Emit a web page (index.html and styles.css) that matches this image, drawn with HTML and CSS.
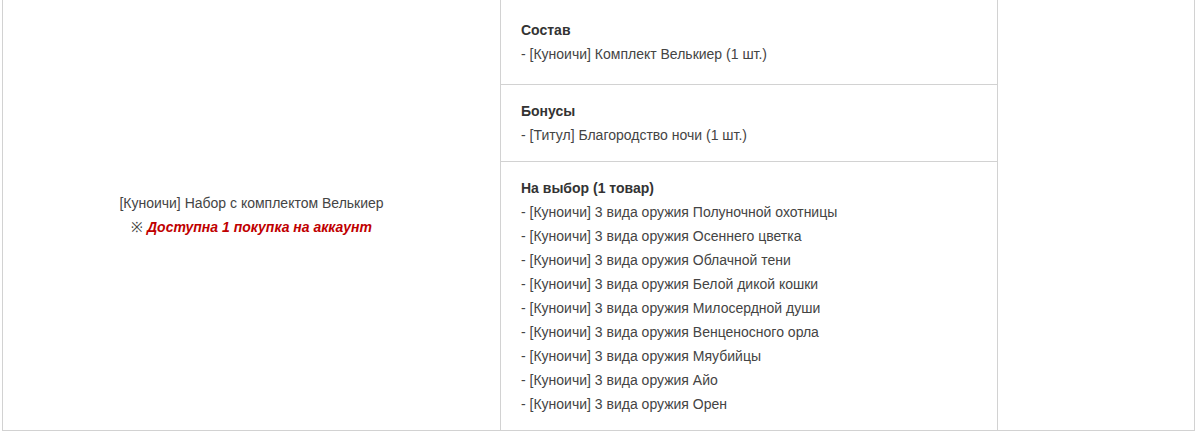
FILE: index.html
```html
<!DOCTYPE html>
<html lang="ru">
<head>
<meta charset="utf-8">
<title>Набор</title>
<link rel="stylesheet" href="styles.css">
</head>
<body>
<div class="wrap">
<table class="pkg">
  <colgroup>
    <col class="c1">
    <col class="c2">
    <col class="c3">
  </colgroup>
  <tbody>
    <tr>
      <td class="name" rowspan="3">
        <div>[Куноичи] Набор с комплектом Велькиер</div>
        <div class="limit">※ <em>Доступна 1 покупка на аккаунт</em></div>
      </td>
      <td class="items first">
        <div class="title">Состав</div>
        <div>- [Куноичи] Комплект Велькиер (1 шт.)</div>
      </td>
      <td class="empty" rowspan="3"></td>
    </tr>
    <tr>
      <td class="items">
        <div class="title">Бонусы</div>
        <div>- [Титул] Благородство ночи (1 шт.)</div>
      </td>
    </tr>
    <tr>
      <td class="items">
        <div class="title">На выбор (1 товар)</div>
        <div>- [Куноичи] 3 вида оружия Полуночной охотницы</div>
        <div>- [Куноичи] 3 вида оружия Осеннего цветка</div>
        <div>- [Куноичи] 3 вида оружия Облачной тени</div>
        <div>- [Куноичи] 3 вида оружия Белой дикой кошки</div>
        <div>- [Куноичи] 3 вида оружия Милосердной души</div>
        <div>- [Куноичи] 3 вида оружия Венценосного орла</div>
        <div>- [Куноичи] 3 вида оружия Мяубийцы</div>
        <div>- [Куноичи] 3 вида оружия Айо</div>
        <div>- [Куноичи] 3 вида оружия Орен</div>
      </td>
    </tr>
  </tbody>
</table>
</div>
</body>
</html>
```
FILE: styles.css
```css
html, body {
  margin: 0;
  padding: 0;
  background: #fff;
}
body {
  font-family: "Liberation Sans", Arial, sans-serif;
  font-size: 14px;
  line-height: 24px;
  color: #444;
}
.wrap {
  padding: 0 4px 0 2px;
  margin-top: -1px;
}
.pkg {
  width: 1192px;
  border-collapse: collapse;
  table-layout: fixed;
}
.c1 { width: 498px; }
.c2 { width: 497px; }
.c3 { width: 197px; }
.pkg td {
  border: 1px solid #d2d2d2;
  padding: 14px 20px;
  vertical-align: middle;
}
.pkg td.first {
  padding-top: 18px;
  padding-bottom: 18px;
}
.name {
  text-align: center;
}
.limit em {
  color: #c00000;
  font-weight: bold;
  font-style: italic;
}
.items {
  text-align: left;
}
.title {
  font-weight: bold;
  color: #333;
}
```
